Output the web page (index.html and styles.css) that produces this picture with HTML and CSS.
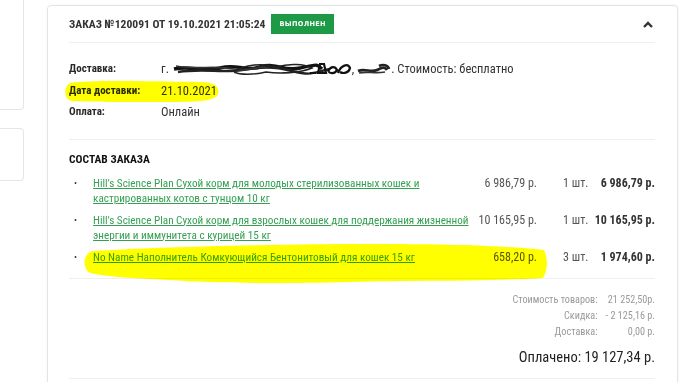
FILE: index.html
```html
<!DOCTYPE html>
<html lang="ru">
<head>
    <meta charset="UTF-8">
    <title>Заказ №120091</title>
    <link rel="stylesheet" href="styles.css">
</head>
<body>
<div class="page">
    <div class="side">
        <div class="side-card first"></div>
        <div class="side-card second"></div>
    </div>
    <div class="order">
        <div class="order-head">
            <span class="order-title">ЗАКАЗ №120091 ОТ 19.10.2021 21:05:24</span>
            <span class="badge">ВЫПОЛНЕН</span>
            <span class="toggle">
                <svg width="10" height="7" viewBox="0 0 10 7"><path d="M1 6 L5 2 L9 6" fill="none" stroke="#333" stroke-width="2.4"/></svg>
            </span>
        </div>
        <div class="info">
            <div class="info-row">
                <span class="label">Доставка:</span>
                <span class="value">г. <span class="hidden-addr">
                    <svg width="180" height="18" viewBox="0 0 180 18">
                        <path d="M2 9 C20 5 30 13 48 8 S70 12 88 7 S110 12 128 8 S145 4 150 9" fill="none" stroke="#111" stroke-width="3.4"/>
                        <path d="M6 12 C30 8 50 13 70 10 S100 6 120 11 S140 13 158 9" fill="none" stroke="#222" stroke-width="2.4"/>
                        <path d="M4 6 C24 10 44 5 62 9 S84 4 96 8" fill="none" stroke="#333" stroke-width="1.6"/>
                        <path d="M62 12 C72 4 92 3 104 7 C118 3 132 4 140 8 C128 13 108 14 94 12 C82 15 68 15 62 12" fill="none" stroke="#222" stroke-width="1.6"/>
                        <path d="M138 13 L144 13 M146 13 L148 4 L152 4 L154 13 Z M156 11 C159 6 163 6 165 10 C163 14 158 14 156 11 M166 13 C169 5 176 3 178 8 C177 13 171 14 168 12" fill="none" stroke="#111" stroke-width="2.2"/>
                    </svg></span>, <span class="hidden-street">
                    <svg width="34" height="14" viewBox="0 0 34 14">
                        <path d="M1 9 C8 6 14 11 20 8 S28 5 30 8 M22 4 C26 2 31 3 32 7" fill="none" stroke="#222" stroke-width="2.6"/>
                        <path d="M2 11 C10 9 18 12 28 10" fill="none" stroke="#333" stroke-width="1.6"/>
                    </svg></span>. Стоимость: бесплатно</span>
            </div>
            <div class="info-row">
                <span class="label">Дата доставки:</span>
                <span class="value">21.10.2021</span>
            </div>
            <div class="info-row">
                <span class="label">Оплата:</span>
                <span class="value">Онлайн</span>
            </div>
        </div>
        <div class="items">
            <div class="items-title">СОСТАВ ЗАКАЗА</div>
            <div class="item">
                <span class="dot">•</span>
                <a class="name" href="#">Hill's Science Plan Сухой корм для молодых стерилизованных кошек и кастрированных котов с тунцом 10 кг</a>
                <span class="price">6 986,79 р.</span>
                <span class="qty">1 шт.</span>
                <span class="total">6 986,79 р.</span>
            </div>
            <div class="item">
                <span class="dot">•</span>
                <a class="name" href="#">Hill's Science Plan Сухой корм для взрослых кошек для поддержания жизненной энергии и иммунитета с курицей 15 кг</a>
                <span class="price">10 165,95 р.</span>
                <span class="qty">1 шт.</span>
                <span class="total">10 165,95 р.</span>
            </div>
            <div class="item">
                <span class="dot">•</span>
                <a class="name" href="#">No Name Наполнитель Комкующийся Бентонитовый для кошек 15 кг</a>
                <span class="price">658,20 р.</span>
                <span class="qty">3 шт.</span>
                <span class="total">1 974,60 р.</span>
            </div>
        </div>
        <div class="summary">
            <div class="sum-grid">
                <span>Стоимость товаров:</span><span>21 252,50р.</span>
                <span>Скидка:</span><span>- 2 125,16 р.</span>
                <span>Доставка:</span><span>0,00 р.</span>
            </div>
            <div class="paid">Оплачено: 19 127,34 р.</div>
        </div>

        <!-- маркер поверх скриншота -->
        <svg class="marker" width="631" height="382" viewBox="0 0 631 382">
            <path d="M22 77 C40 74 90 75 150 76 C166 76 172 80 170 88 C168 95 150 96 120 96 C80 96 40 96 24 95 C15 94 16 80 22 77 Z" fill="#ffff00"/>
            <path d="M44 245 C110 241 220 238 330 238 C420 238 470 241 496 244 C500 252 500 264 495 272 C430 276 360 274 300 276 C220 278 170 277 120 274 C80 272 50 270 40 266 C34 258 36 248 44 245 Z" fill="#ffff00"/>
        </svg>
    </div>
</div>
</body>
</html>
```

FILE: styles.css
```css
*{
    margin: 0;
    padding: 0;
    box-sizing: border-box;
}
body{
    background: #fff;
    font-family: "Liberation Sans Narrow", "Roboto Condensed", Roboto, sans-serif;
    color: #222;
    overflow: hidden;
}
.page{
    display: flex;
    align-items: flex-start;
}
.side{
    width: 24px;
    display: flex;
    flex-direction: column;
    gap: 18px;
}
.side-card{
    border: 1px solid #e6e6e6;
    border-left: none;
    border-radius: 0 4px 4px 0;
    background: #fff;
}
.side-card.first{
    height: 114px;
    margin-top: -4px;
}
.side-card.second{
    height: 53px;
}
.order{
    position: relative;
    width: 631px;
    height: 400px;
    margin: 5px 0 0 23px;
    padding: 0 22px 0 21px;
    border: 1px solid #e4e4e4;
    border-radius: 4px;
    box-shadow: 0 0 3px rgba(0,0,0,0.06);
}
.order-head{
    height: 37px;
    display: flex;
    align-items: center;
    border-bottom: 1px solid #efefef;
}
.order-title{
    font-size: 11.6px;
    font-weight: bold;
    color: #333;
}
.badge{
    margin-left: 6px;
    background: #1c9a46;
    color: #fff;
    font-family: "DejaVu Sans", sans-serif;
    font-weight: bold;
    font-size: 6.6px;
    padding: 6px 8px;
    letter-spacing: 0.3px;
}
.toggle{
    margin-left: auto;
    margin-right: 2px;
    display: flex;
}
.info{
    padding: 15px 0 16px;
    border-bottom: 1px solid #efefef;
}
.info-row{
    display: flex;
    height: 21.5px;
    align-items: center;
    font-size: 12px;
}
.label{
    width: 92px;
    font-size: 11px;
    font-weight: bold;
    color: #2a2a2a;
}
.value{
    color: #333;
    display: flex;
    align-items: center;
    white-space: pre;
    font-size: 12.5px;
}
.hidden-addr, .hidden-street{
    display: inline-flex;
}
.items{
    padding: 12px 0 6px;
    border-bottom: 1px solid #efefef;
}
.items-title{
    font-size: 11.5px;
    font-weight: bold;
    color: #111;
    margin-bottom: 10px;
}
.item{
    display: grid;
    grid-template-columns: 24px 376px 68px 52px 1fr;
    align-items: start;
    font-size: 12px;
    line-height: 15px;
    margin-bottom: 7px;
}
.dot{
    padding-left: 5px;
    font-size: 9px;
    color: #333;
}
.name{
    font-size: 11.2px;
    color: #34a052;
    text-decoration: underline;
}
.price{
    text-align: right;
    color: #555;
}
.qty{
    padding-left: 26px;
    color: #555;
}
.total{
    text-align: right;
    font-weight: bold;
    color: #333;
}
.summary{
    padding: 13px 0 12px;
    border-bottom: 1px solid #efefef;
    display: flex;
    flex-direction: column;
    align-items: flex-end;
}
.sum-grid{
    display: grid;
    grid-template-columns: auto auto;
    column-gap: 8px;
    row-gap: 1px;
    font-size: 10.2px;
    line-height: 15px;
    color: #999;
    text-align: right;
}
.paid{
    margin-top: 10px;
    font-size: 14.5px;
    color: #222;
}
.marker{
    position: absolute;
    left: 0;
    top: 0;
    pointer-events: none;
    mix-blend-mode: multiply;
}
```
